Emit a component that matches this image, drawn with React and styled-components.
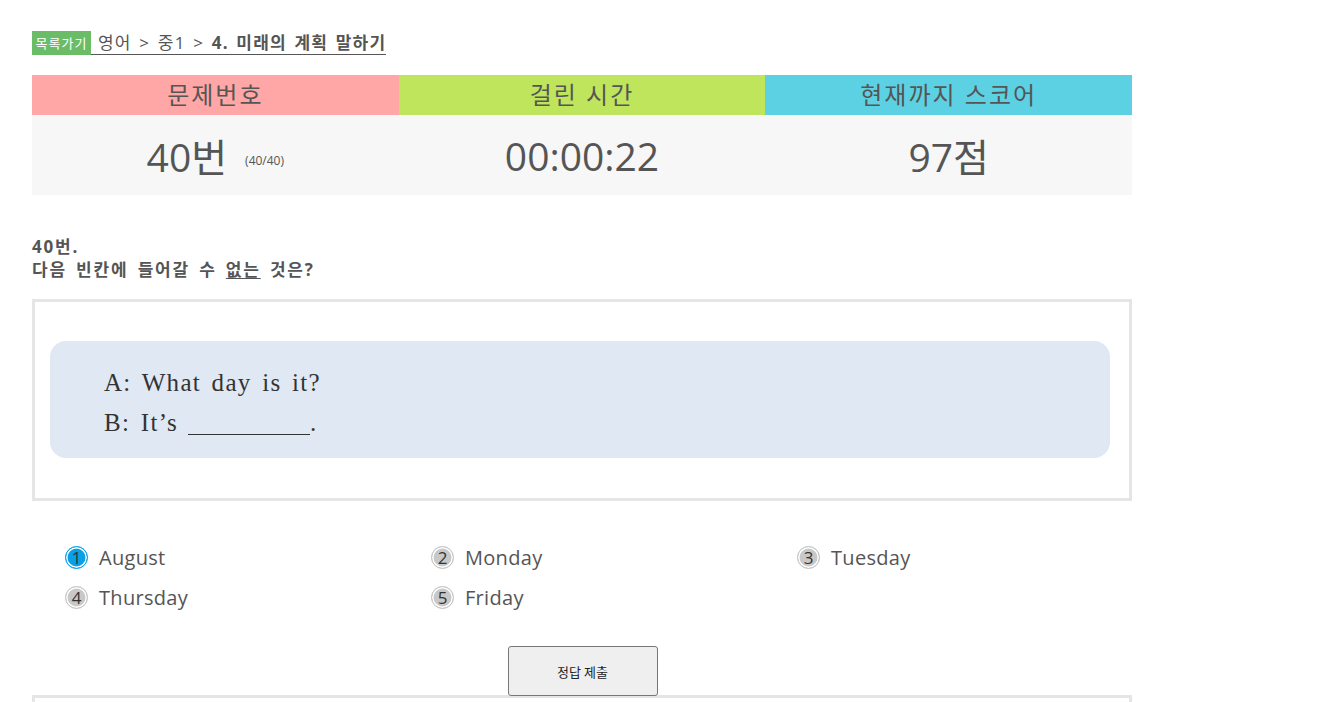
import React from 'react';
import styled, { createGlobalStyle } from 'styled-components';

const Global = createGlobalStyle`
  body {
    margin: 0;
    background: #fff;
    font-family: "Open Sans", "Noto Sans CJK KR", sans-serif;
    color: #555;
  }
`;

const Page = styled.div`
  width: 1100px;
  padding: 31px 0 0 32px;
`;

const Crumb = styled.div`
  display: flex;
  align-items: flex-end;
  height: 24px;
`;

const Badge = styled.span`
  display: inline-block;
  background: #6abd66;
  color: #fff;
  font-family: "Noto Sans CJK KR", sans-serif;
  font-size: 13px;
  line-height: 24px;
  letter-spacing: 1px;
  width: 59px;
  text-align: center;
  height: 24px;
`;

const CrumbLink = styled.span`
  color: #555;
  font-size: 17px;
  line-height: 22px;
  border-bottom: 1px solid #555;
  padding: 0 0 0 7px;
  letter-spacing: 1.2px;
  word-spacing: 2px;
  b { font-weight: 700; }
`;

const Stats = styled.div`
  display: grid;
  grid-template-columns: repeat(3, 1fr);
  margin-top: 20px;
`;

const Head = styled.div`
  background: ${p => p.$bg};
  height: 40px;
  line-height: 40px;
  text-align: center;
  font-size: 24px;
  letter-spacing: 2px;
  color: #555;
`;

const Value = styled.div`
  background: #f7f7f7;
  height: 80px;
  display: flex;
  align-items: center;
  justify-content: center;
  font-size: 39px;
  color: #555;
`;

const Small = styled.span`
  font-size: 12px;
  margin-left: 18px;
  align-self: center;
  margin-top: 10px;
`;

const Question = styled.div`
  margin-top: 40px;
  font-weight: 700;
  font-size: 17px;
  line-height: 23px;
  letter-spacing: 1.8px;
  word-spacing: 3px;
  color: #555;
`;

const Under = styled.span`
  text-decoration: underline;
  text-underline-offset: 2px;
`;

const Box = styled.div`
  margin-top: 18px;
  border: 3px solid #e5e5e5;
  padding: 39px 19px 40px 15px;
`;

const Dialog = styled.div`
  background: #dfe8f3;
  border-radius: 16px;
  height: 117px;
  padding: 22px 0 0 54px;
  box-sizing: border-box;
  font-family: "Liberation Serif", "DejaVu Serif", serif;
  font-size: 25px;
  line-height: 40px;
  color: #333;
  letter-spacing: 1.3px;
  word-spacing: 3px;
`;

const Blank = styled.span`
  display: inline-block;
  width: 122px;
  border-bottom: 1.5px solid #333;
  height: 26px;
  margin-left: 10px;
  vertical-align: -4px;
`;

const Choices = styled.div`
  display: grid;
  grid-template-columns: repeat(3, 366px);
  row-gap: 12px;
  padding: 42px 0 0 33px;
`;

const Choice = styled.div`
  display: flex;
  align-items: center;
  font-size: 20px;
  letter-spacing: 0.3px;
  height: 28px;
  color: #555;
`;

const Num = styled.span`
  width: 23px;
  height: 23px;
  border-radius: 50%;
  box-sizing: border-box;
  background: ${p => (p.$on ? '#0aa0e6' : '#c8c8c8')};
  border: 1px solid ${p => (p.$on ? '#0aa0e6' : '#c4c4c4')};
  box-shadow: inset 0 0 0 1.5px #fff;
  display: flex;
  align-items: center;
  justify-content: center;
  font-size: 17px;
  letter-spacing: 0;
  color: #333;
  margin-right: 11px;
`;

const Actions = styled.div`
  display: flex;
  justify-content: center;
  margin-top: 35px;
  position: relative;
  z-index: 1;
`;

const Submit = styled.button`
  width: 150px;
  height: 50px;
  background: #efefef;
  border: 1px solid #777;
  border-radius: 3px;
  font-family: "Noto Sans CJK KR", sans-serif;
  font-size: 13px;
  color: #222;
  margin-left: 1px;
`;

const Next = styled.div`
  border: 3px solid #e5e5e5;
  height: 60px;
  margin-top: -1px;
`;

const choices = ['August', 'Monday', 'Tuesday', 'Thursday', 'Friday'];

export default function App() {
  return (
    <Page>
      <Global />
      <Crumb>
        <Badge>목록가기</Badge>
        <CrumbLink>영어 &gt; 중1 &gt; <b>4. 미래의 계획 말하기</b></CrumbLink>
      </Crumb>
      <Stats>
        <Head $bg="#ffa6a6">문제번호</Head>
        <Head $bg="#bee55c">걸린 시간</Head>
        <Head $bg="#5dd1e4">현재까지 스코어</Head>
        <Value>40번<Small>(40/40)</Small></Value>
        <Value>00:00:22</Value>
        <Value>97점</Value>
      </Stats>
      <Question>
        40번.<br />
        다음 빈칸에 들어갈 수 <Under>없는</Under> 것은?
      </Question>
      <Box>
        <Dialog>
          A: What day is it?<br />
          B: It’s<Blank />.
        </Dialog>
      </Box>
      <Choices>
        {choices.map((c, i) => (
          <Choice key={c}>
            <Num $on={i === 0}>{i + 1}</Num>
            {c}
          </Choice>
        ))}
      </Choices>
      <Actions>
        <Submit>정답 제출</Submit>
      </Actions>
      <Next />
    </Page>
  );
}
